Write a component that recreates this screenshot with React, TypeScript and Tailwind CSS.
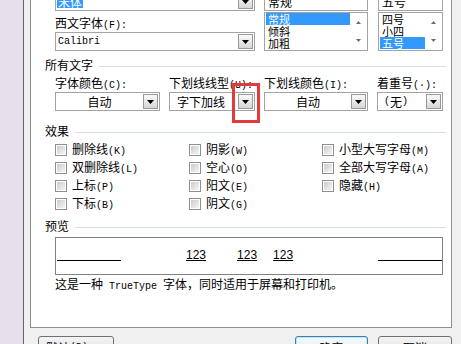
import type { ReactNode } from "react";

// half-width latin glyphs, 6px advance like the dialog's bitmap font
function M({ children }: { children: ReactNode }) {
  return (
    <span className="font-['Liberation_Mono',monospace] text-[10px] leading-none">
      {children}
    </span>
  );
}

function DownTri() {
  return (
    <svg width="7" height="4" viewBox="0 0 7 4">
      <path d="M0 0h7L3.5 4z" fill="#000" />
    </svg>
  );
}

function ScrollTri({ up }: { up?: boolean }) {
  return (
    <svg width="5" height="3" viewBox="0 0 5 3">
      <path d={up ? "M0 3h5L2.5 0z" : "M0 0h5L2.5 3z"} fill="#6b6b6b" />
    </svg>
  );
}

function Combo({
  className,
  children,
  inner,
}: {
  className?: string;
  children?: ReactNode;
  inner?: string;
}) {
  return (
    <div
      className={`h-[19px] flex items-center border border-[#a3a3a3] bg-white pr-[1px] ${className ?? ""}`}
    >
      <div className={`flex-1 min-w-0 flex items-center leading-[12px] whitespace-nowrap ${inner ?? ""}`}>
        {children}
      </div>
      <div className="w-[15px] h-[15px] flex items-center justify-center border border-[#999999] bg-linear-to-b from-[#fafafa] to-[#d6d6d6]">
        <DownTri />
      </div>
    </div>
  );
}

function List({
  items,
  sel,
  className,
}: {
  items: string[];
  sel: number;
  className?: string;
}) {
  return (
    <div className={`h-[39px] border border-[#a3a3a3] bg-white flex ${className ?? ""}`}>
      <div className="flex-1 pl-[1px] flex flex-col">
        {items.map((t, i) => (
          <div
            key={t}
            className={`h-[12px] flex items-center text-[11px] leading-[11px] pl-[2px] ${i === sel ? "bg-[#3399ff] text-white" : ""}`}
          >
            {t}
          </div>
        ))}
      </div>
      <div className="w-[17px] flex flex-col">
        <div className="flex-1 flex items-center justify-center">
          <ScrollTri up />
        </div>
        <div className="flex-1 flex items-center justify-center">
          <ScrollTri />
        </div>
      </div>
    </div>
  );
}

function Group({ title }: { title: string }) {
  return (
    <div className="flex items-center gap-[6px] h-[12px]">
      <span className="leading-[12px] whitespace-nowrap">{title}</span>
      <div className="flex-1 h-px mt-[2px] bg-[#d5dfe5]" />
    </div>
  );
}

function Check({ label }: { label: ReactNode }) {
  return (
    <div className="h-[18px] flex items-center gap-[5px] whitespace-nowrap">
      <div className="w-[12px] h-[12px] border border-[#8e8f8f] p-px bg-white">
        <div className="w-full h-full bg-linear-to-br from-[#cccccc] to-[#f5f5f5]" />
      </div>
      <span className="leading-[12px]">{label}</span>
    </div>
  );
}

function Btn({ className, children }: { className?: string; children: ReactNode }) {
  return (
    <div
      className={`h-[23px] rounded-[3px] border flex items-center justify-center leading-[12px] whitespace-nowrap ${className ?? ""}`}
    >
      {children}
    </div>
  );
}

export default function App() {
  return (
    <div className="w-[461px] h-[344px] overflow-hidden flex bg-[#f0f0f0] text-[12px] leading-[12px] text-black font-['Noto_Sans_CJK_SC',sans-serif]">
      <div className="w-[23px] shrink-0 bg-[#e6e0ec]" />
      <div className="w-px shrink-0 bg-[#666666]" />

      <div className="flex-1 flex flex-col pl-[6px] pr-[9px]">
        {/* tab page */}
        <div className="h-[328px] shrink-0 border-x border-b border-[#8e8f8f] bg-white flex flex-col pl-[14px] pr-[5px]">
          {/* fonts row, cut off at the top */}
          <div className="-mt-[8px] pl-[10px] flex">
            <div className="w-[200px] flex flex-col">
              <Combo inner="pl-px">
                <span className="px-px leading-[13px] bg-[#3399ff] text-white">宋体</span>
              </Combo>
              <div className="mt-[6px] h-[12px] leading-[12px] whitespace-nowrap">
                西文字体<M>(F):</M>
              </div>
              <Combo className="mt-[3px]" inner="pl-[2px]">
                <M>Calibri</M>
              </Combo>
            </div>
            <div className="ml-[9px] w-[104px] flex flex-col">
              <div className="h-[19px] border border-[#a3a3a3] bg-white pl-[3px] flex items-center">
                常规
              </div>
              <List className="mt-px" items={["常规", "倾斜", "加粗"]} sel={0} />
            </div>
            <div className="ml-[10px] w-[65px] flex flex-col">
              <div className="h-[19px] border border-[#a3a3a3] bg-white pl-[3px] flex items-center">
                五号
              </div>
              <List className="mt-px" items={["四号", "小四", "五号"]} sel={2} />
            </div>
          </div>

          <div className="mt-[8px]">
            <Group title="所有文字" />
          </div>
          <div className="mt-[6px] pl-[10px] flex">
            <div className="w-[105px] flex flex-col">
              <div className="h-[12px] leading-[12px] whitespace-nowrap">
                字体颜色<M>(C):</M>
              </div>
              <Combo className="mt-[3px]" inner="justify-center">
                自动
              </Combo>
            </div>
            <div className="relative ml-[9px] w-[86px] flex flex-col">
              <div className="h-[12px] leading-[12px] whitespace-nowrap">
                下划线线型<M>(U):</M>
              </div>
              <Combo className="mt-[3px]" inner="pl-[7px]">
                字下加线
              </Combo>
              <div className="absolute left-[63px] top-[6px] w-[28px] h-[40px] border-[3px] border-[#e23b3b]" />
            </div>
            <div className="ml-[9px] w-[104px] flex flex-col">
              <div className="h-[12px] leading-[12px] whitespace-nowrap">
                下划线颜色<M>(I):</M>
              </div>
              <Combo className="mt-[3px]" inner="justify-center">
                自动
              </Combo>
            </div>
            <div className="ml-[9px] w-[66px] flex flex-col">
              <div className="h-[12px] leading-[12px] whitespace-nowrap">
                着重号<M>(·):</M>
              </div>
              <Combo className="mt-[3px]" inner="pl-[6px]">
                <M>(</M>无<M>)</M>
              </Combo>
            </div>
          </div>

          <div className="mt-[14px]">
            <Group title="效果" />
          </div>
          <div className="mt-[4px] pl-[10px] grid grid-cols-[134px_133px_1fr]">
            <div className="flex flex-col">
              <Check label={<>删除线<M>(K)</M></>} />
              <Check label={<>双删除线<M>(L)</M></>} />
              <Check label={<>上标<M>(P)</M></>} />
              <Check label={<>下标<M>(B)</M></>} />
            </div>
            <div className="flex flex-col">
              <Check label={<>阴影<M>(W)</M></>} />
              <Check label={<>空心<M>(O)</M></>} />
              <Check label={<>阳文<M>(E)</M></>} />
              <Check label={<>阴文<M>(G)</M></>} />
            </div>
            <div className="flex flex-col">
              <Check label={<>小型大写字母<M>(M)</M></>} />
              <Check label={<>全部大写字母<M>(A)</M></>} />
              <Check label={<>隐藏<M>(H)</M></>} />
            </div>
          </div>

          <div className="mt-[7px]">
            <Group title="预览" />
          </div>
          <div className="mt-[5px] ml-[10px] w-[388px] h-[38px] shrink-0 border border-[#828282] bg-white flex items-start pt-[12px]">
            <div className="ml-px mt-[10px] w-[64px] h-px bg-black" />
            <span className="ml-[65px] font-['Liberation_Sans',sans-serif] text-[12px] leading-[11px] underline underline-offset-[1px]">
              123
            </span>
            <span className="ml-[31px] font-['Liberation_Sans',sans-serif] text-[12px] leading-[11px] underline underline-offset-[1px]">
              123
            </span>
            <span className="ml-[16px] font-['Liberation_Sans',sans-serif] text-[12px] leading-[11px] underline underline-offset-[1px]">
              123
            </span>
            <div className="ml-auto mt-[10px] w-[64px] h-px bg-black" />
          </div>
          <div className="mt-[3px] ml-[10px] h-[12px] leading-[12px] whitespace-nowrap">
            这是一种<M> TrueType </M>字体，同时适用于屏幕和打印机。
          </div>
        </div>

        {/* dialog buttons */}
        <div className="mt-[8px] flex">
          <Btn className="ml-[8px] w-[76px] border-[#707070] bg-linear-to-b from-[#f4f4f4] to-[#dcdcdc]">
            默认<M>(D)...</M>
          </Btn>
          <Btn className="ml-auto w-[73px] border-[#3c7fb1] bg-linear-to-b from-[#f4f9fc] to-[#dfeef7] shadow-[inset_0_0_0_1px_#bfe3f7]">
            确定
          </Btn>
          <Btn className="ml-[10px] w-[74px] border-[#707070] bg-linear-to-b from-[#f4f4f4] to-[#dcdcdc]">
            取消
          </Btn>
        </div>
      </div>
    </div>
  );
}
